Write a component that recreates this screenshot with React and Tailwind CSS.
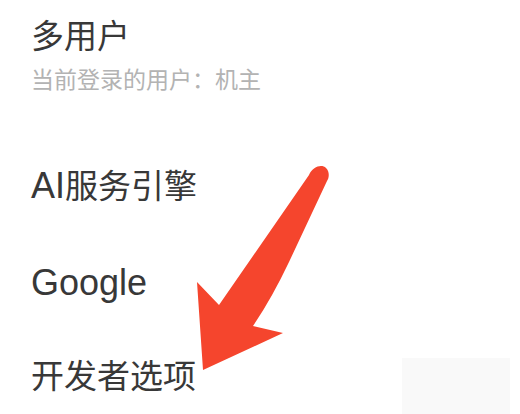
import React from "react";

const cjk = { fontFamily: '"Liberation Sans", "Noto Sans CJK SC", sans-serif' };

const Row = ({ children, className }) => (
  <div className={"h-[40px] leading-[40px] text-[33px] text-[#383838] whitespace-nowrap " + className}>
    {children}
  </div>
);

const Arrow = () => (
  <svg className="absolute left-0 top-0" width="520" height="414" viewBox="0 0 520 414">
    <path
      d="M219 305 L309 175 C313 166 322 164 326 168 C330 172 329 178 327 181 L289 262 Q272 298 253 326 L283 333 L203 370 L197 282 Z"
      fill="#f5452d"
    />
  </svg>
);

export default function App() {
  return (
    <div className="relative w-[520px] h-[414px] bg-white overflow-hidden" style={cjk}>
      <div className="flex flex-col pl-[31px] pt-[17px]">
        <Row>多用户</Row>
        <div className="mt-[8px] h-[30px] leading-[30px] text-[23px] text-[#b3b3b3] whitespace-nowrap">
          当前登录的用户：机主
        </div>
        <Row className="mt-[71px]">
          <span className="text-[36px]">AI</span>服务引擎
        </Row>
        <Row className="mt-[57px]">
          <span className="text-[36px]">Google</span>
        </Row>
        <Row className="mt-[54px]">开发者选项</Row>
      </div>
      <div className="absolute left-[402px] top-[358px] w-[108px] h-[56px] bg-[#f9f9f9]" />
      <Arrow />
    </div>
  );
}
